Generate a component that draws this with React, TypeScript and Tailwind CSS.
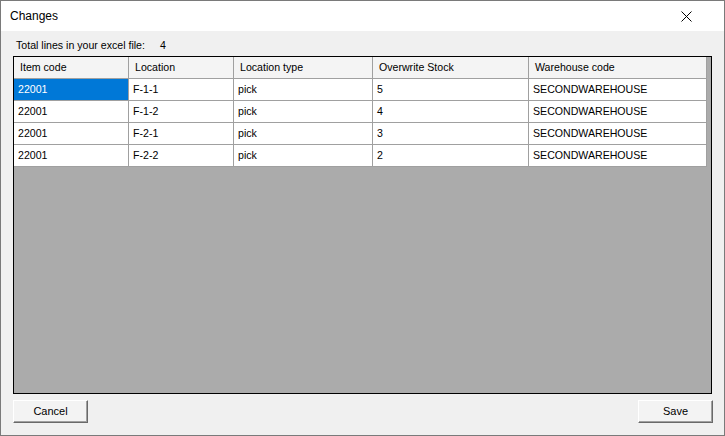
import React from "react";

const cols = [
  { name: "Item code", w: 115 },
  { name: "Location", w: 105 },
  { name: "Location type", w: 139 },
  { name: "Overwrite Stock", w: 156 },
  { name: "Warehouse code", w: 178 },
];

const rows = [
  ["22001", "F-1-1", "pick", "5", "SECONDWAREHOUSE"],
  ["22001", "F-1-2", "pick", "4", "SECONDWAREHOUSE"],
  ["22001", "F-2-1", "pick", "3", "SECONDWAREHOUSE"],
  ["22001", "F-2-2", "pick", "2", "SECONDWAREHOUSE"],
];

export default function App() {
  return (
    <div
      className="w-[725px] h-[436px] border border-[#7a7a7a] bg-[#f0f0f0] flex flex-col text-[10.6px] text-black"
      style={{ fontFamily: '"Liberation Sans", Arial, sans-serif' }}
    >
      <div className="h-[30px] bg-white flex items-center justify-between pl-[9px] pr-[32px] shrink-0">
        <span className="text-[12px]">Changes</span>
        <svg width="11" height="11" viewBox="0 0 11 11">
          <path d="M0.5 0.5 L10.5 10.5 M10.5 0.5 L0.5 10.5" stroke="#000" strokeWidth="1" />
        </svg>
      </div>
      <div className="flex items-center h-[13px] mt-[8px] pl-[15px] leading-[13px]">
        <span>Total lines in your excel file:</span>
        <span className="ml-[15px]">4</span>
      </div>
      <div className="ml-[12px] mt-[4px] w-[699px] h-[338px] border border-black bg-[#ababab] flex flex-col">
        <div className="flex h-[22px] bg-[#f4f4f4] w-[693px]">
          {cols.map((c, i) => (
            <div
              key={i}
              className="h-[22px] border-r border-b border-[#a0a0a0] flex items-center pl-[6px] bg-[#f4f4f4]"
              style={{ width: c.w }}
            >
              {c.name}
            </div>
          ))}
        </div>
        {rows.map((r, ri) => (
          <div key={ri} className="flex h-[22px] w-[693px]">
            {r.map((v, ci) => {
              const sel = ri === 0 && ci === 0;
              return (
                <div
                  key={ci}
                  className={
                    "h-[22px] border-r border-b border-[#a0a0a0] flex items-center pl-[4px] pt-[1px] " +
                    (sel ? "bg-[#0078d7] text-white" : "bg-white")
                  }
                  style={{ width: cols[ci].w }}
                >
                  {v}
                </div>
              );
            })}
          </div>
        ))}
      </div>
      <div className="flex justify-between ml-[12px] mr-[11px] mt-[6px]">
        <button className="w-[75px] h-[23px] bg-[#f3f3f3] border border-t-white border-l-white border-r-[#696969] border-b-[#696969] shadow-[inset_-1px_-1px_0_#a0a0a0] text-[11px] text-black">
          Cancel
        </button>
        <button className="w-[75px] h-[23px] bg-[#f3f3f3] border border-t-white border-l-white border-r-[#696969] border-b-[#696969] shadow-[inset_-1px_-1px_0_#a0a0a0] text-[11px] text-black">
          Save
        </button>
      </div>
    </div>
  );
}
